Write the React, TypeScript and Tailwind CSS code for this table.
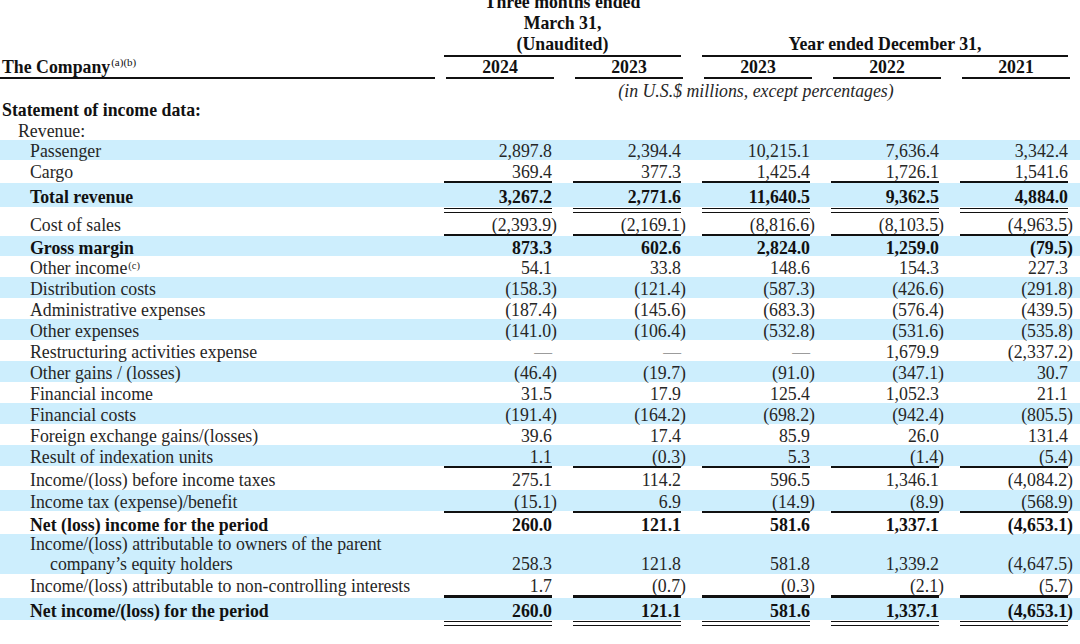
import clsx from 'clsx'
import type { ReactNode } from 'react'

type Row = {
  label: ReactNode
  vals: string[]
  h: string
  blue?: boolean
  bold?: boolean
  rule?: 'single' | 'double'
}

const ROWS: Row[] = [
  { label: 'Passenger', h: 'h-[20px] pt-[3px]', blue: true, vals: ['2,897.8', '2,394.4', '10,215.1', '7,636.4', '3,342.4'] },
  { label: 'Cargo', h: 'h-[21px] pt-[3px]', rule: 'single', vals: ['369.4', '377.3', '1,425.4', '1,726.1', '1,541.6'] },
  { label: 'Total revenue', h: 'h-[23.5px] pt-[4px]', blue: true, bold: true, rule: 'double', vals: ['3,267.2', '2,771.6', '11,640.5', '9,362.5', '4,884.0'] },
  { label: 'Cost of sales', h: 'h-[20px] pt-[3px]', rule: 'single', vals: ['(2,393.9)', '(2,169.1)', '(8,816.6)', '(8,103.5)', '(4,963.5)'] },
  { label: 'Gross margin', h: 'h-[20px] pt-[3px]', blue: true, bold: true, vals: ['873.3', '602.6', '2,824.0', '1,259.0', '(79.5)'] },
  {
    label: (
      <>
        Other income<sup className="ml-[1px] text-[10.5px]">(c)</sup>
      </>
    ),
    h: 'h-[20.5px] pt-[3px]',
    vals: ['54.1', '33.8', '148.6', '154.3', '227.3'],
  },
  { label: 'Distribution costs', h: 'h-[21px] pt-[3px]', blue: true, vals: ['(158.3)', '(121.4)', '(587.3)', '(426.6)', '(291.8)'] },
  { label: 'Administrative expenses', h: 'h-[21px] pt-[3px]', vals: ['(187.4)', '(145.6)', '(683.3)', '(576.4)', '(439.5)'] },
  { label: 'Other expenses', h: 'h-[21px] pt-[3px]', blue: true, vals: ['(141.0)', '(106.4)', '(532.8)', '(531.6)', '(535.8)'] },
  { label: 'Restructuring activities expense', h: 'h-[21px] pt-[3px]', vals: ['—', '—', '—', '1,679.9', '(2,337.2)'] },
  { label: 'Other gains / (losses)', h: 'h-[21px] pt-[3px]', blue: true, vals: ['(46.4)', '(19.7)', '(91.0)', '(347.1)', '30.7'] },
  { label: 'Financial income', h: 'h-[21px] pt-[3px]', vals: ['31.5', '17.9', '125.4', '1,052.3', '21.1'] },
  { label: 'Financial costs', h: 'h-[21px] pt-[3px]', blue: true, vals: ['(191.4)', '(164.2)', '(698.2)', '(942.4)', '(805.5)'] },
  { label: 'Foreign exchange gains/(losses)', h: 'h-[21px] pt-[3px]', vals: ['39.6', '17.4', '85.9', '26.0', '131.4'] },
  { label: 'Result of indexation units', h: 'h-[21px] pt-[3px]', blue: true, rule: 'single', vals: ['1.1', '(0.3)', '5.3', '(1.4)', '(5.4)'] },
  { label: 'Income/(loss) before income taxes', h: 'h-[21.5px] pt-[3px]', vals: ['275.1', '114.2', '596.5', '1,346.1', '(4,084.2)'] },
  { label: 'Income tax (expense)/benefit', h: 'h-[21px] pt-[3px]', blue: true, rule: 'single', vals: ['(15.1)', '6.9', '(14.9)', '(8.9)', '(568.9)'] },
  { label: 'Net (loss) income for the period', h: 'h-[21px] pt-[3px]', bold: true, vals: ['260.0', '121.1', '581.6', '1,337.1', '(4,653.1)'] },
  {
    label: (
      <>
        <div>Income/(loss) attributable to owners of the parent</div>
        <div className="pl-[20px]">company’s equity holders</div>
      </>
    ),
    h: 'h-[40px] !items-end',
    blue: true,
    vals: ['258.3', '121.8', '581.8', '1,339.2', '(4,647.5)'],
  },
  { label: 'Income/(loss) attributable to non-controlling interests', h: 'h-[21px] pt-[3px]', rule: 'single', vals: ['1.7', '(0.7)', '(0.3)', '(2.1)', '(5.7)'] },
  { label: 'Net income/(loss) for the period', h: 'h-[22px] pt-[4px]', blue: true, bold: true, rule: 'double', vals: ['260.0', '121.1', '581.6', '1,337.1', '(4,653.1)'] },
]

function Num({ v }: { v: string }) {
  if (v === '—') return <span className="text-[#9c9c9c]">—</span>
  if (v.startsWith('('))
    return (
      <>
        {v.slice(0, -1)}
        <span className="-mr-[5px]">)</span>
      </>
    )
  return <>{v}</>
}

function Rule({ double }: { double?: boolean }) {
  return (
    <div className={clsx('flex', double ? 'h-[7px] pt-[1px]' : 'h-[2.5px]')}>
      <div className="w-[444px] shrink-0" />
      <div className="flex gap-[21px]">
        {[0, 1, 2, 3, 4].map((i) => (
          <div
            key={i}
            className={clsx(
              'w-[108px]',
              double ? 'h-[5.5px] border-y-[1.5px] border-[#111]' : 'h-[2.5px] bg-[#111]',
            )}
          />
        ))}
      </div>
    </div>
  )
}

export default function App() {
  return (
    <div className="h-[644px] w-[1080px] overflow-hidden bg-white font-['Liberation_Serif',_'Times_New_Roman',_serif] text-[17.8px] leading-[20px] text-[#262626]">
      {/* column heads */}
      <div className="-mt-[8px] flex items-end font-bold leading-[20.9px] text-[#111]">
        <div className="w-[444px] shrink-0" />
        <div className="w-[237px] border-b-[2.5px] border-[#111] text-center">
          <div>Three months ended</div>
          <div>March 31,</div>
          <div>(Unaudited)</div>
        </div>
        <div className="ml-[21px] w-[366px] border-b-[2.5px] border-[#111] text-center">Year ended December 31,</div>
      </div>

      <div className="flex items-end font-bold text-[#111]">
        <div className="box-content flex h-[20.7px] w-[433px] shrink-0 items-center border-b-[2.5px] border-[#111] pl-[2px]">
          The Company<sup className="ml-[1px] text-[11px] font-normal">(a)(b)</sup>
        </div>
        <div className="ml-[11px] flex gap-[21px]">
          {['2024', '2023', '2023', '2022', '2021'].map((y, i) => (
            <div key={i} className="box-content flex h-[20.7px] w-[108px] items-center justify-center border-b-[2.5px] border-[#111]">
              {y}
            </div>
          ))}
        </div>
      </div>

      <div className="flex h-[21px] items-center pt-[2px]">
        <div className="w-[444px] shrink-0" />
        <div className="w-[624px] text-center italic">(in U.S.$ millions, except percentages)</div>
      </div>

      <div className="flex h-[19px] items-center pl-[2px] font-bold text-[#111]">Statement of income data:</div>
      <div className="flex h-[20.3px] items-center pl-[18px] pt-[2px]">Revenue:</div>

      {ROWS.map((r, idx) => (
        <div key={idx}>
          <div
            className={clsx(
              'flex items-center',
              r.h,
              r.blue && 'bg-[#cdeefd]',
              r.bold && 'font-bold text-[#111]',
            )}
          >
            <div className="w-[444px] shrink-0 whitespace-nowrap pl-[30px]">{r.label}</div>
            <div className="flex gap-[21px]">
              {r.vals.map((v, i) => (
                <div key={i} className="w-[108px] whitespace-nowrap text-right">
                  <Num v={v} />
                </div>
              ))}
            </div>
          </div>
          {r.rule && <Rule double={r.rule === 'double'} />}
        </div>
      ))}
    </div>
  )
}
